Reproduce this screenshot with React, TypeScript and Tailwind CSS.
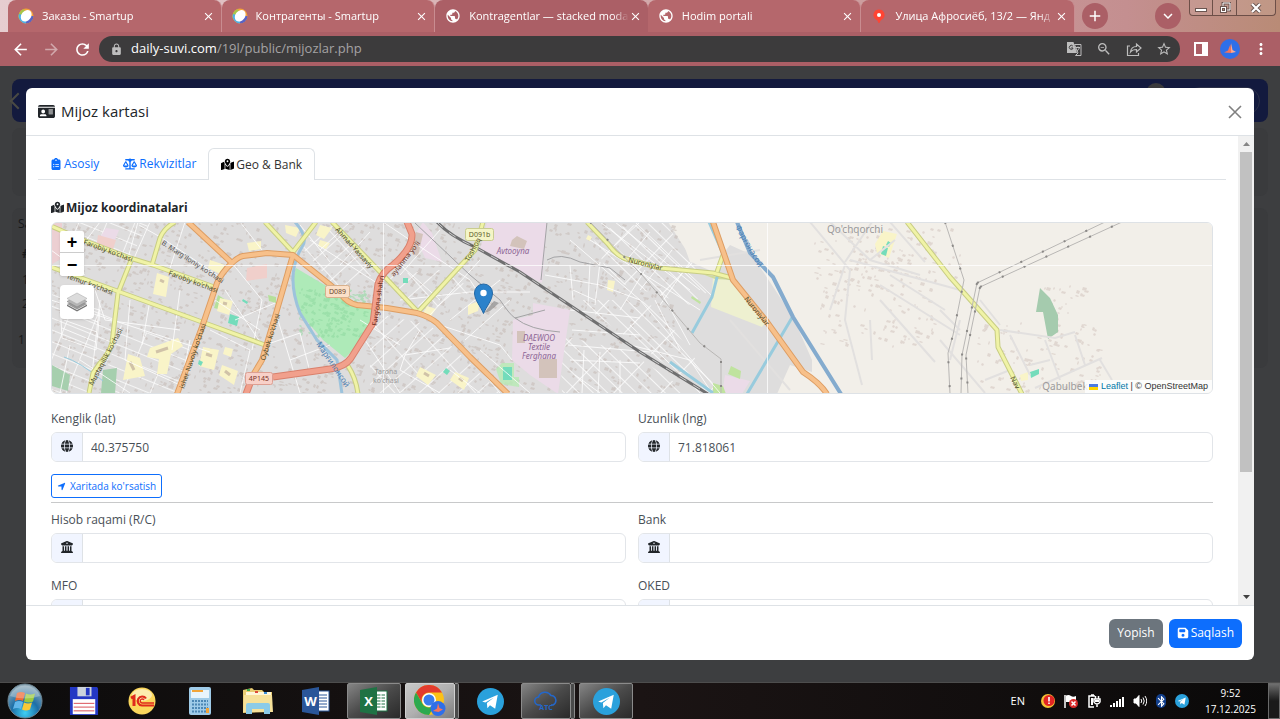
import type { ReactNode } from 'react';
import {
  FaBuildingColumns,
  FaClipboardList,
  FaFloppyDisk,
  FaGlobe,
  FaIdCard,
  FaLocationArrow,
  FaMapLocationDot,
  FaScaleBalanced,
} from 'react-icons/fa6';
import {
  MdAdd,
  MdArrowBack,
  MdArrowForward,
  MdBluetooth,
  MdClose,
  MdExpandMore,
  MdGTranslate,
  MdLock,
  MdMoreVert,
  MdPublic,
  MdRefresh,
  MdStarBorder,
  MdZoomOut,
} from 'react-icons/md';

/* ---------- Browser chrome ---------- */

function SmartupIcon() {
  return (
    <svg viewBox="0 0 16 16" className="size-4 shrink-0">
      <circle cx="8" cy="8" r="7.500" fill="#f4a23a" />
      <path d="M1 11 A7.500 7.500 0 0 1 6 1 L8 8 Z" fill="#a7c64a" />
      <path d="M1 6 A7.500 7.500 0 0 0 8 15.500 L8 8 Z" fill="#4fb0e6" />
      <path d="M8 15.500 A7.500 7.500 0 0 0 15.500 8 L8 8 Z" fill="#5a63c4" />
      <ellipse cx="8.200" cy="7.800" rx="4.800" ry="6.300" transform="rotate(38 8.200 7.800)" fill="#fff" />
    </svg>
  );
}

function YandexPin() {
  return (
    <svg viewBox="0 0 16 16" className="size-4 shrink-0">
      <path d="M8 1.500a5.500 5.500 0 0 1 4 9.300C10.500 12 9 12.500 8.500 15h-1C7 12.500 5.500 12 4 10.800A5.500 5.500 0 0 1 8 1.500z" fill="#f43" />
      <circle cx="8" cy="7" r="2" fill="#fff" />
    </svg>
  );
}

const TABS = [
  { title: 'Заказы - Smartup', icon: <SmartupIcon /> },
  { title: 'Контрагенты - Smartup', icon: <SmartupIcon /> },
  { title: 'Kontragentlar — stacked moda', icon: <MdPublic size={16} className="shrink-0" />, active: true },
  { title: 'Hodim portali', icon: <MdPublic size={16} className="shrink-0" /> },
  { title: 'Улица Афросиёб, 13/2 — Янд', icon: <YandexPin /> },
];

function TabStrip() {
  return (
    <div className="flex h-8 bg-linear-to-r from-[#e6cdd0] from-0% via-[#c48f90] via-88% to-[#b98b76] pl-2 text-white">
      <div className="flex min-w-0 max-w-[1067px] flex-1">
        {TABS.map((tab) => (
          <div
            key={tab.title}
            className={`flex min-w-0 flex-1 items-center rounded-t-lg pr-1.5 pl-2.5 ${
              tab.active ? 'bg-[#ab5f66]' : 'border-r border-[#c98c90] bg-[#b5676c]'
            }`}
          >
            {tab.icon}
            <span className="ml-2 min-w-0 flex-1 overflow-hidden mask-r-from-90% text-[11px] whitespace-nowrap">{tab.title}</span>
            <button aria-label="Close tab" className="shrink-0">
              <MdClose size={13} />
            </button>
          </div>
        ))}
      </div>
      <button aria-label="New tab" className="mt-[3px] ml-[7px] flex size-[26px] items-center justify-center rounded-full bg-[#ab5f66]">
        <MdAdd size={18} />
      </button>
      <div className="ml-auto flex">
        <button aria-label="Search tabs" className="mt-[3px] mr-2 flex size-[26px] items-center justify-center rounded-full bg-[#ab5f66]">
          <MdExpandMore size={18} />
        </button>
        <div className="mr-1 flex h-4 rounded-b border border-t-0 border-[#6d4f48] bg-white/10">
          <button aria-label="Minimize" className="flex w-[23px] items-center justify-center border-r border-[#6d4f48]">
            <span className="mt-1 h-1 w-3 border border-[#6a5550] bg-white" />
          </button>
          <button aria-label="Restore" className="flex w-6 items-center justify-center border-r border-[#6d4f48]">
            <svg viewBox="0 0 12 12" className="size-3" fill="none" stroke="#6a5550">
              <path d="M4 4V1h7v7H8" strokeWidth="3" />
              <path d="M4 4V1h7v7H8" stroke="#fff" />
              <rect x="1.500" y="4.500" width="6" height="6" fill="#fff" />
              <rect x="3.500" y="6.500" width="2" height="2" fill="#b98b76" />
            </svg>
          </button>
          <button aria-label="Close" className="flex w-[38px] items-center justify-center">
            <svg viewBox="0 0 12 10" className="h-2.5 w-3" fill="none">
              <path d="M2 1l8 8M10 1l-8 8" stroke="#6a5550" strokeWidth="4" />
              <path d="M2 1l8 8M10 1l-8 8" stroke="#fff" strokeWidth="2.200" />
            </svg>
          </button>
        </div>
      </div>
    </div>
  );
}

function Toolbar() {
  return (
    <div className="flex h-[34px] items-center bg-[#ab5f66] px-2.5 text-white">
      <div className="flex gap-2.5">
        <button aria-label="Back" className="px-px"><MdArrowBack size={19} /></button>
        <button aria-label="Forward" className="px-px text-white/45"><MdArrowForward size={19} /></button>
        <button aria-label="Reload" className="px-px"><MdRefresh size={19} /></button>
      </div>
      <div className="ml-1.5 flex h-[26px] min-w-0 flex-1 items-center rounded-full bg-[#3c3b3c] pr-2 pl-[11px] text-[#bdbdbd]">
        <MdLock size={13} className="shrink-0" />
        <span className="ml-2 flex-1 text-[13px] text-[#a5a3a4]">
          <span className="text-white">daily-suvi.com</span>/19l/public/mijozlar.php
        </span>
        <div className="flex gap-3.5">
          <button aria-label="Translate">
            <svg viewBox="0 0 16 16" className="size-4">
              <path d="M1 1h6.500l3.500 11H1z" fill="#bdbdbd" />
              <path d="M8.500 3.500H15v11H9.500L12 12z" fill="none" stroke="#bdbdbd" />
              <path d="M9.500 6.500h4.500M12 5.500v1M10.500 10q2.500-1 3-3.500" fill="none" stroke="#bdbdbd" />
              <path d="M6.800 5A2 2 0 1 0 7 7.500V7H5" fill="none" stroke="#3c3b3c" />
            </svg>
          </button>
          <button aria-label="Zoom"><MdZoomOut size={16} /></button>
          <button aria-label="Share">
            <svg viewBox="0 0 16 16" className="size-4" fill="none" stroke="currentColor" strokeWidth="1.200">
              <path d="M4 5H1.500v9.500h11V12" />
              <path d="M4.500 11c.5-4 3-5.500 6-5.500V3L15 7l-4.500 4V8.500C8 8.500 6 9 4.500 11z" />
            </svg>
          </button>
          <button aria-label="Bookmark"><MdStarBorder size={16} /></button>
        </div>
      </div>
      <div className="ml-3.5 flex items-center gap-3">
        <button aria-label="Side panel">
          <svg viewBox="0 0 14 14" className="size-3.5">
            <path fillRule="evenodd" d="M0 0h14v14H0zM2 2v10h6V2z" fill="#fff" />
          </svg>
        </button>
        <button aria-label="Profile">
          <svg viewBox="0 0 20 20" className="size-5">
            <circle cx="10" cy="10" r="10" fill="#2f6fe8" />
            <path d="M11 4l1.500 7 3.500 2-5 1z" fill="#ffab91" />
            <path d="M10.500 5l.8 9-7.300-.5 4-2z" fill="#f4745c" />
          </svg>
        </button>
        <button aria-label="Menu"><MdMoreVert size={18} /></button>
      </div>
    </div>
  );
}

/* ---------- Map ---------- */

const YELLOW_ROADS = [
  'M51 226 83 240 130 258 153 265 217 288',
  'M51 267 120 292 202 322 265 345',
  'M132 258 118 293 112 343Q108 355 100 363L93 373 89 393',
  'M152 265 160 238Q164 228 175 222',
  'M265 222 293 252 316 222',
  'M332 222 383 275 418 312 463 263 475 250 483 222',
  'M587 222 608 244Q618 258 630 260L660 268 713 273 732 278',
  'M717 272 723 255',
  'M907 222 950 277 997 330 998 347 1022 394',
  'M348 366Q356 378 358 394',
];

const ORANGE_ROADS = [
  'M188 222 232 263',
  'M177 394 202 327 217 283Q222 272 232 263 238 257 243 256L267 253 293 255 328 283 340 293Q347 303 357 305L387 308 417 313Q430 317 437 323L470 357 508 394',
  'M293 255 277 310 262 360 250 380',
  'M713 222 733 280 767 322 803 372Q820 383 827 394',
];

const RED_ROADS = [
  'M246 394 252 378',
  'M273 377 330 369Q345 367 351 358L373 323 378 284Q382 272 393 265 413 248 412 234L407 222',
];

const RAIL = 'M437 222Q450 236 475 247L520 272 640 352 708 394';

const MINOR_STREETS = [
  'M138 222 128 258M150 222 120 290M139 225 162 238 217 275M100 222 60 275M51 300 210 352M185 222 170 268M100 300 90 393',
  'M60 300 100 310 96 350 62 338ZM65 310 98 322M64 320 97 332M62 328 96 342M150 300 142 345M70 345 60 393',
  'M130 300 125 360 180 385M210 330 250 350 240 393M225 290 262 345M235 320 275 303M265 345 300 333 310 372M275 310 300 393M290 360 330 345',
  'M310 240 380 285M320 250 350 222M340 265 370 232M232 263 262 300 252 350M300 225 330 262M240 222 262 250',
  'M383 222 470 280 483 300M395 260 440 300M400 300 470 292 530 292M440 230 400 275M430 315 480 260M450 320 500 280M465 340 510 300M420 330 405 355 400 370 440 393M405 355 450 348',
  'M440 325 500 345 512 360M470 357 500 393M480 350 530 393M450 370 480 393M360 320 400 345M365 340 400 393M380 312 360 350',
  'M545 275 600 285 640 300M570 265 573 300M590 262 588 305M600 262 595 305M573 290 595 300M570 310 640 318M572 330 640 335M568 345 650 352M570 360 640 363M575 375 600 393M584 350 582 393M600 352 598 393M620 360 620 393',
  'M600 222 690 290M615 222 700 290M635 222 712 296M590 240 700 310M570 240 640 300M660 290 690 345M645 270 620 310M640 300 720 393M630 325 700 393M655 300 680 350M630 345 690 360 712 393',
  'M650 232 625 262M672 250 640 290M690 262 660 305M640 222 610 250',
  'M51 250 85 275M95 290 105 320 180 330M180 290 172 350M80 360 130 393M190 340 180 390M215 300 260 330',
];

const VILLAGE_STREETS = [
  'M810 222 850 270 845 320 862 385 M830 222 870 260 920 275 M872 222 845 262 M890 222 925 262 M845 265 830 310 M850 260 960 290 M880 300 935 362 M870 320 872 360 M880 285 960 335 M890 275 945 310 M870 260 895 240',
  'M1000 330 1055 338 1075 332 M1075 335 1085 365 M1010 335 1030 375 M1030 365 1050 360 M1045 340 1060 380 M985 380 1010 370 M1035 388 1102 358 M1100 360 1112 380 M980 300 1000 325 M940 310 960 330 M940 340 985 393',
  'M700 260 760 250M730 320 790 390M960 320 950 360',
];

const POWER_LINES = [
  'M945 222 964 280 953 335 948 353 950 394',
  'M977 283 1105 222M980 287 1122 222',
  'M977 283 962 355 961 394M980 287 966 355 968 394',
  'M590 222 642 275 700 343 721 359 721 394',
];

// small seeded generator so the building footprints stay the same on each render
function scatter(count: number, seed: number, x0: number, x1: number, y0: number, y1: number) {
  let s = seed;
  const next = () => {
    s = (s * 16807) % 2147483647;
    return s / 2147483647;
  };
  let d = '';
  for (let i = 0; i < count; i++) {
    const x = Math.round(x0 + next() * (x1 - x0));
    const y = Math.round(y0 + next() * (y1 - y0));
    const w = 1 + Math.round(next() * 3);
    const h = 1 + Math.round(next() * 2);
    d += `M${x} ${y}l${w} 1l-1 ${h}l-${w} -1z`;
  }
  return d;
}

const CITY_BLOCKS = scatter(1500, 71, 51, 545, 222, 394) + scatter(330, 19, 545, 680, 222, 394);
const VILLAGE_HOUSES =
  scatter(160, 33, 815, 935, 235, 345) + scatter(60, 5, 850, 960, 225, 290) + scatter(100, 12, 978, 1100, 320, 390) + scatter(30, 8, 1045, 1085, 285, 330);

function MapTiles() {
  return (
    <svg viewBox="51 223 1162 170" preserveAspectRatio="xMidYMid slice" className="h-[170px] w-full" fontFamily="'Noto Sans', sans-serif">
      <defs>
        <pattern id="streets-a" width="26" height="11" patternUnits="userSpaceOnUse" patternTransform="rotate(22)">
          <path d="M0 .5H26M.5 0V11" fill="none" stroke="#fff" strokeOpacity=".7" />
        </pattern>
        <pattern id="streets-b" width="30" height="13" patternUnits="userSpaceOnUse" patternTransform="rotate(-42)">
          <path d="M0 .5H30M.5 0V13" fill="none" stroke="#fff" strokeOpacity=".7" />
        </pattern>
        <pattern id="streets-c" width="34" height="10" patternUnits="userSpaceOnUse" patternTransform="rotate(44)">
          <path d="M0 .5H34M.5 0V10" fill="none" stroke="#fff" strokeOpacity=".75" />
        </pattern>
      </defs>

      <rect x="0" y="200" width="1300" height="220" fill="#f2efe9" />
      <path d="M0 200H668L690 262 712 268 730 245 752 255 793 317 812 360 812 372 790 365 777 394H0z" fill="#dedddd" />
      <path d="M668 222H712L723 254 714 272 695 264z" fill="#f2efe9" />

      <path d={CITY_BLOCKS} fill="#c6bcb8" opacity=".6" />
      <path d={VILLAGE_HOUSES} fill="#d9cdc6" opacity=".7" />
      <path d="M51 294 118 316 108 360 88 393H51zM60 225 130 258 150 222H70zM120 325 190 345 180 393H100z" fill="url(#streets-a)" />
      <path d="M300 245 330 222 378 272 340 293zM383 315 430 325 500 393H370V330zM380 275 440 270 475 290 425 312z" fill="url(#streets-b)" />
      <path d="M590 230 665 222 710 290 690 305 610 280zM640 300 660 310 720 393H706L575 300zM560 335 630 352 690 393H562z" fill="url(#streets-c)" />

      {/* industrial and commercial areas */}
      <g fill="#ebdbe8">
        <path d="M487 222H547L542 283 520 272 480 250z" />
        <path d="M533 303 570 310 558 394 530 375 512 360 513 320 533 315z" />
        <path d="M423 222 432 233 442 262 425 258 415 235z" />
        <path d="M106 228 119 230 113 245 98 240z" />
        <path d="M725 375 750 381 742 394H722z" />
      </g>
      <path d="M51 222H62V258L51 265z" fill="#eccfd2" />
      <path d="M98 235 116 240 112 252 96 248zM247 268 267 264V278L246 281z" fill="#f0cfcb" />
      <path d="M713 277 733 281 765 323 762 327 711 307z" fill="#eef0d0" />
      <path d="M702 274 735 280 715 279z" fill="#cfdc9c" />

      {/* parks and greenery */}
      <path d="M296 268 328 287 340 297Q350 307 372 308L372 322 357 346 345 358 323 340 300 313 292 285z" fill="#aeeab8" />
      <path d={scatter(170, 44, 300, 366, 288, 335)} fill="#8fd8a0" opacity=".6" />
      <path d="M52 365 70 375 68 391 52 386zM103 370 117 368 115 394 101 393z" fill="#a6cfae" />
      <path d="M1040 288 1050 298 1058 315V332L1048 339 1043 312H1036z" fill="#a5cbae" />
      <path d="M218 295 226 300 222 310 214 308zM268 295l8 2v6l-7-2z" fill="#b5e09b" />
      <path d="M731 366l10 5-1 8-12-5zM713 383l10 3 3 8h-13zM692 296l9 6-1 2-9-6z" fill="#bfe39e" />
      <path d="M502 363h12v14h5v10l-18-3-5-15z" fill="#b6ebb4" opacity=".8" />

      {/* schools */}
      <g fill="#f9f4c8">
        <path d="M157 273l12 4-3 20-13-3zM128 354l12 4 5 18-22 4zM150 348l28-10 5 8-12 8-4 20h-10l2-15-12-2zM203 347l16 3-5 20-15-4zM220 298l13 3-4 14-12-4zM222 365l16 6-4 14-15-10zM225 347l8 2-2 8-8-3z" />
        <path d="M320 225l12 3-8 11-8-4zM420 367l16 8-8 10-12-9zM455 372l14 6-5 12-14-10zM608 280l7 1-2 11-6-2zM468 305l12-4-2 10-10 4zM427 306l9 3-5 7-8-3zM588 235l4 2-2 4-4-2zM247 243l14-2v8l-12 2zM285 225l15 3-4 9-10-4zM320 240l10 3-4 6-8-3zM210 260l15 5-5 9-12-6z" />
        <path d="M875 244l8-13 14 3-8 24-12-5zM1020 375l8-3v8l-7 1z" />
      </g>
      <path d="M130 362l4 8M156 352l12-4M160 280l4 2M206 354l6 2M223 303l4 1M225 371l5 4M424 373l5 3M459 378l4 3M503 367v0" stroke="#d0c2a8" strokeWidth="3" />
      <path d="M230 314l9 3-2 9-9-3zM503 367h9v13h-9zM446 368l4 3-3 4-4-3zM403 278h5v5h-5zM883 246l5 2-2 8-5-2zM888 241l3 2-2 4-3-2zM1030 372l9-3v5l-8 4zM199 360l4 2-2 4-3-2zM243 299l5 3-1 2-5-3z" fill="#74dcbb" />
      <path d="M512 240l5-4 10 5-3 8-14-3zM539 359h18v19h-18zM517 331h8v12h-8zM416 232l7 2-5 22-6-2z" fill="#d3c3bb" />

      {/* streets */}
      <g fill="none" stroke="#fff" strokeOpacity=".8">
        {MINOR_STREETS.map((d) => (
          <path key={d} d={d} />
        ))}
      </g>
      <g fill="none" stroke="#e2e0df" strokeWidth="2">
        {VILLAGE_STREETS.map((d) => (
          <path key={d} d={d} />
        ))}
      </g>

      {/* water */}
      <g fill="none" stroke="#98cbdd" strokeWidth="3">
        <path d="M709 222 723 254 712 297 692 333" />
        <path d="M793 316 747 394M670 362 713 393" />
        <path d="M295 222Q309 238 302 247 285 275 300 313L317 340 337 360 342 394" stroke="#9dc3dc" />
        <path d="M64 357Q80 362 103 381" strokeWidth="1" />
      </g>
      <path d="M737 222 750 253 773 277 793 317 841 394" fill="none" stroke="#84abce" strokeWidth="4" />

      {/* railway */}
      <g fill="none" stroke="#a3a3a5" strokeWidth="1">
        <path d="M415 223 470 275 500 300Q510 315 515 318L545 310M515 318Q530 330 560 332M547 222 541 280M547 260Q560 252 580 262L610 268 625 280" />
        <path d={RAIL} stroke="#6f6f70" strokeWidth="3" />
        <path d={RAIL} stroke="#c9c9c9" strokeWidth="1" strokeDasharray="8 8" />
      </g>

      {/* main roads: casing first, fill on top */}
      <g fill="none" strokeLinejoin="round">
        {YELLOW_ROADS.map((d) => (
          <path key={d} d={d} stroke="#c8cd84" strokeWidth="5" />
        ))}
        {YELLOW_ROADS.map((d) => (
          <path key={d} d={d} stroke="#f0f3a6" strokeWidth="3" />
        ))}
        {ORANGE_ROADS.map((d) => (
          <path key={d} d={d} stroke="#dd9d63" strokeWidth="6" />
        ))}
        {ORANGE_ROADS.map((d) => (
          <path key={d} d={d} stroke="#f7c08a" strokeWidth="4" />
        ))}
        {RED_ROADS.map((d) => (
          <path key={d} d={d} stroke="#d9806c" strokeWidth="7" />
        ))}
        {RED_ROADS.map((d) => (
          <path key={d} d={d} stroke="#f1a08c" strokeWidth="5" />
        ))}
      </g>

      <g fill="none" stroke="#b9b7b5" strokeWidth="1">
        {POWER_LINES.map((d) => (
          <path key={d} d={d} />
        ))}
        {POWER_LINES.map((d) => (
          <path key={d} d={d} stroke="#8b8987" strokeWidth="2" strokeDasharray="2 22" />
        ))}
      </g>

      {/* tile seams */}
      <path d="M51 265.500H1213M383.500 222V394M767.500 222V394" stroke="#fff" strokeOpacity=".75" />

      {/* road numbers */}
      <g fontSize="7" textAnchor="middle" strokeWidth="1">
        <rect x="325.500" y="285.500" width="24" height="12" rx="2" fill="#fbe0c8" stroke="#d8b08c" />
        <text x="337.500" y="294" fill="#6b4a2c">D089</text>
        <rect x="465.500" y="228.500" width="28" height="12" rx="2" fill="#f4f5c6" stroke="#c9cc90" />
        <text x="479.500" y="237" fill="#5c5e2c">D091b</text>
        <rect x="245.500" y="372.500" width="27" height="12" rx="2" fill="#f8d0c8" stroke="#dd9f92" />
        <text x="259" y="381" fill="#7a3328">4P145</text>
      </g>

      <g fontSize="7" fill="#4d4c2c">
        <text transform="translate(83 244) rotate(20)">Farobiy ko'chasi</text>
        <text transform="translate(168 275) rotate(20)">Farobiy ko'chasi</text>
        <text transform="translate(66 278) rotate(20)">Temur ko'chasi</text>
        <text transform="translate(161 244) rotate(33)" fill="#555">B. Marg'iloniy ko'chasi</text>
        <text transform="translate(93 386) rotate(-62)">Mustaqillik ko'chasi</text>
        <text transform="translate(184 389) rotate(-71)">isher Navoiy ko'chasi</text>
        <text transform="translate(265 361) rotate(-72)">Oybek ko'chasi</text>
        <text transform="translate(335 230) rotate(48)">Ahmad Yassaviy</text>
        <text transform="translate(377 326) rotate(-82)" fill="#6b2f24">Farg'ona shahri</text>
        <text transform="translate(394 277) rotate(-52)" fill="#6b2f24">aylanma yo'li</text>
        <text transform="translate(469 262) rotate(-62)">Toshloq</text>
        <text transform="translate(628 262) rotate(14)">Nuroniylar</text>
        <text transform="translate(744 299) rotate(51)">Nuroniylar</text>
        <text transform="translate(1010 378) rotate(62)">Nav</text>
      </g>
      <g fontSize="8" fill="#4a7fb5">
        <text transform="translate(735 227) rotate(60)">Фарғонасой</text>
        <text transform="translate(316 344) rotate(56)">Марғилонсой</text>
      </g>
      <g fontSize="8" textAnchor="middle" fontStyle="italic" fill="#8b6594">
        <text x="513" y="254">Avtooyna</text>
        <text x="539" y="341">DAEWOO</text>
        <text x="539" y="350">Textile</text>
        <text x="539" y="359">Ferghana</text>
      </g>
      <g textAnchor="middle" fill="#9b9a9b">
        <text x="386" y="374" fontSize="7">Tarona</text>
        <text x="386" y="383" fontSize="7">ko'chasi</text>
        <text x="855" y="233" fontSize="10">Qo'chqorchi</text>
        <text x="1065" y="390" fontSize="10">Qabulbek</text>
      </g>

      {/* marker */}
      <path d="M484 313 494 301 499 303 490 311z" fill="#000" opacity=".25" />
      <path d="M483.500 313.500C481 307 474.500 300 474.500 293a9 9 0 0 1 18 0C492.500 300 486 307 483.500 313.500z" fill="#2b82cb" stroke="#2468a5" />
      <circle cx="483.500" cy="293" r="3.200" fill="#fff" />
    </svg>
  );
}

function MapView() {
  return (
    <div className="relative overflow-hidden rounded-md border border-[#dee2e6]">
      <MapTiles />
      <div className="absolute top-2 left-2 flex flex-col gap-[9px]">
        <div className="flex w-6 flex-col divide-y divide-[#ccc] rounded-xs bg-white font-['Liberation_Sans',sans-serif] text-lg leading-[22px] font-bold text-black shadow">
          <button aria-label="Zoom in" className="h-[22px]">+</button>
          <button aria-label="Zoom out" className="h-[23px]">−</button>
        </div>
        <button aria-label="Layers" className="flex size-[34px] items-center justify-center rounded bg-white shadow">
          <svg viewBox="0 0 20 20" className="size-5">
            <path d="M0 12.500 10 18l10-5.500v1.500L10 19.500 0 14z" fill="#777" />
            <path d="M0 12 10 7l10 5-10 5.500z" fill="#9b9b9b" />
            <path d="M0 9.500 10 4l10 5.500L10 15z" fill="#b5b5b5" stroke="#888" strokeWidth=".6" />
            <path d="M0 6.500 10 1l10 5.500L10 12z" fill="#dcdcdc" stroke="#b0b0b0" strokeWidth=".6" />
          </svg>
        </button>
      </div>
      <div className="absolute right-0 bottom-0 flex h-[13px] items-center bg-white/80 px-1 font-['Liberation_Sans',sans-serif] text-[9px] text-[#333]">
        <svg viewBox="0 0 9 6" className="mr-[3px] h-1.5 w-[9px]">
          <path d="M0 0h9v3H0z" fill="#4c7be1" />
          <path d="M0 3h9v3H0z" fill="#ffd500" />
        </svg>
        <a href="#leaflet" className="text-[#0078a8]">Leaflet</a>
        <span className="whitespace-pre"> | © OpenStreetMap</span>
      </div>
    </div>
  );
}

/* ---------- Modal ---------- */

interface FieldProps {
  id: string;
  label: string;
  icon: ReactNode;
  value?: string;
}

function Field({ id, label, icon, value = '' }: FieldProps) {
  return (
    <div className="min-w-0">
      <label htmlFor={id} className="block h-[22px] text-xs leading-[18px] text-[#495057]">{label}</label>
      <div className="flex h-[30px] overflow-hidden rounded-md border border-[#e2e5e9]">
        <span className="flex w-[31px] shrink-0 items-center justify-center border-r border-[#dee2e6] bg-[#f1f5ff] pb-0.5 text-[#212529]">{icon}</span>
        <input id={id} type="text" defaultValue={value} className="min-w-0 flex-1 px-2 pt-0.5 text-xs text-[#495057] outline-none" />
      </div>
    </div>
  );
}

function ModalTabs() {
  return (
    <div role="tablist" className="flex h-8 border-b border-[#dee2e6] text-xs">
      <button role="tab" className="flex items-center gap-0.5 px-3 text-[#0d6efd]">
        <FaClipboardList size={12} /> Asosiy
      </button>
      <button role="tab" className="flex items-center gap-0.5 px-3 text-[#0d6efd]">
        <FaScaleBalanced size={14} /> Rekvizitlar
      </button>
      <button
        role="tab"
        aria-selected="true"
        className="-mb-px flex items-center gap-0.5 rounded-t-md border border-b-0 border-[#dee2e6] bg-white px-3 text-[#333]"
      >
        <FaMapLocationDot size={13} className="text-black" /> Geo &amp; Bank
      </button>
    </div>
  );
}

function ScrollBar() {
  return (
    <div aria-hidden="true" className="flex w-4 shrink-0 flex-col items-center bg-[#f1f1f1] py-1.5">
      <svg viewBox="0 0 7 4" className="h-1 w-[7px]"><path d="M0 4 3.500 0 7 4z" fill="#868686" /></svg>
      <div className="mt-1.5 h-[70%] w-3 bg-[#c1c1c1]" />
      <svg viewBox="0 0 7 4" className="mt-auto h-1 w-[7px]"><path d="M0 0h7L3.500 4z" fill="#404040" /></svg>
    </div>
  );
}

function CustomerModal() {
  return (
    <div role="dialog" aria-labelledby="modal-title" className="relative flex min-h-0 flex-1 flex-col overflow-hidden rounded-md bg-white text-[#212529]">
      <header className="flex h-12 shrink-0 items-center justify-between border-b border-[#dee2e6] px-3">
        <h5 id="modal-title" className="flex items-center gap-1.5 text-[15px]">
          <FaIdCard size={17} /> Mijoz kartasi
        </h5>
        <button aria-label="Close" className="text-[#808080]">
          <svg viewBox="0 0 14 14" className="size-3.5" stroke="currentColor" strokeWidth="1.600">
            <path d="M1 1l12 12M13 1 1 13" />
          </svg>
        </button>
      </header>

      <div className="flex min-h-0 flex-1">
        <div className="min-w-0 flex-1 overflow-hidden p-3">
          <ModalTabs />
          <form className="px-[13px] pt-[19px]">
            <h6 className="mb-1.5 flex h-[17px] items-center gap-0.5 text-xs font-bold">
              <FaMapLocationDot size={13} /> Mijoz koordinatalari
            </h6>
            <MapView />
            <div className="mt-4 grid grid-cols-2 gap-x-3">
              <Field id="lat" label="Kenglik (lat)" icon={<FaGlobe size={12} />} value="40.375750" />
              <Field id="lng" label="Uzunlik (lng)" icon={<FaGlobe size={12} />} value="71.818061" />
            </div>
            <button type="button" className="mt-3 flex h-6 items-center gap-1 rounded-[3px] border border-[#0d6efd] px-[5px] text-[10px] text-[#0d6efd]">
              <FaLocationArrow size={9} /> Xaritada ko'rsatish
            </button>
            <hr className="mt-1 mb-2 border-[#c8c9ca]" />
            <div className="grid grid-cols-2 gap-x-3 gap-y-3.5">
              <Field id="account" label="Hisob raqami (R/C)" icon={<FaBuildingColumns size={12} />} />
              <Field id="bank" label="Bank" icon={<FaBuildingColumns size={12} />} />
              <Field id="mfo" label="MFO" icon={<FaBuildingColumns size={12} />} />
              <Field id="oked" label="OKED" icon={<FaBuildingColumns size={12} />} />
            </div>
          </form>
        </div>
        <ScrollBar />
      </div>

      <footer className="flex h-[55px] shrink-0 items-center justify-end gap-1.5 border-t border-[#dee2e6] px-3 text-xs text-white">
        <button className="h-[29px] rounded-md bg-[#6c757d] px-2">Yopish</button>
        <button className="flex h-[29px] items-center gap-0.5 rounded-md bg-[#0d6efd] px-2">
          <FaFloppyDisk size={12} /> Saqlash
        </button>
      </footer>
    </div>
  );
}

// dimmed list page that stays visible round the edges of the modal
function DimmedPage() {
  return (
    <div aria-hidden="true" className="absolute inset-0 px-3 pt-[13px] text-xs text-[#17181a]">
      <div className="flex h-[43px] items-center justify-end gap-5 rounded-lg bg-[#131a3e] pr-2">
        <span className="mr-auto size-3 rotate-45 border-b-2 border-l-2 border-[#4a4a44]" />
        <span className="mb-4 size-5 rounded-full bg-[#3a3a3c]" />
        <span className="h-7 w-[74px] rounded-full border border-[#2b3048]" />
      </div>
      <div className="mt-1.5 h-[68px] rounded-lg bg-[#3a3b3d]" />
      <div className="mt-3 h-40 rounded-lg bg-[#3a3b3d] px-1.5">
        <div className="flex h-8 items-center">Sahifa</div>
        <div className="flex h-7 items-center pl-1 font-bold">#</div>
        <div className="flex h-6 items-center pl-1">1</div>
        <div className="flex h-6 items-center pl-1">2</div>
        <div className="flex h-12 items-center">1</div>
      </div>
    </div>
  );
}

/* ---------- Taskbar ---------- */

function TelegramIcon({ size }: { size: number }) {
  return (
    <svg viewBox="0 0 26 26" width={size} height={size}>
      <circle cx="13" cy="13" r="13" fill="#2aa1dc" />
      <path d="M5 13 20 6.500 17.500 20l-5-3.500-2.500 3-.5-5L16 9.500 8 14z" fill="#fff" />
    </svg>
  );
}

function StartOrb() {
  return (
    <svg viewBox="0 0 36 36" className="size-9">
      <defs>
        <radialGradient id="orb" cx="50%" cy="85%" r="80%">
          <stop offset="0" stopColor="#3fd0f5" />
          <stop offset=".5" stopColor="#1d6ea6" />
          <stop offset="1" stopColor="#8ea9b8" />
        </radialGradient>
      </defs>
      <circle cx="18" cy="18" r="17" fill="url(#orb)" stroke="#6f8794" />
      <path d="M10 10q4-2 8 0l-2 8q-4-2-8 0z" fill="#ee6a35" />
      <path d="M19 10.500q4 2 9 0l-2 8q-4 2-9 0z" fill="#9bc93f" />
      <path d="M8 19q4-2 8 0l-2 7q-4-2-8 0z" fill="#62b6ea" />
      <path d="M17 19.500q4 2 8 0l-2 7q-4 2-8 0z" fill="#fbc935" />
      <path d="M3 13A16 16 0 0 1 33 13Q18 18 3 13z" fill="#fff" opacity=".28" />
    </svg>
  );
}

function FloppyIcon() {
  return (
    <svg viewBox="0 0 32 32" className="size-[30px]">
      <path d="M1 1h29l1 2v28H1z" fill="#2438c4" />
      <path d="M9 1h15v10H9z" fill="#ccd3dc" />
      <path d="M18 2h4v8h-4z" fill="#2438c4" />
      <path d="M4 14h24v16H4z" fill="#fff" />
      <path d="M5 18.500h22M5 22.500h22M5 26.500h22" stroke="#d8474f" />
    </svg>
  );
}

function OneCIcon() {
  return (
    <svg viewBox="0 0 28 28" className="size-7">
      <circle cx="14" cy="14" r="13.500" fill="#fbd75c" />
      <ellipse cx="14" cy="8" rx="10" ry="6" fill="#fff" opacity=".5" />
      <g fill="none" stroke="#e02a1c" strokeWidth="2.200">
        <path d="M3 11 6 9.500V19" strokeWidth="3" />
        <path d="M18 11.500A4.500 4.500 0 1 0 14 18.500H26" />
        <path d="M16 13a2 2 0 1 0-1.500 3H26" strokeWidth="1.300" />
      </g>
    </svg>
  );
}

function CalculatorIcon() {
  return (
    <svg viewBox="0 0 22 28" className="h-7 w-[22px]">
      <rect width="22" height="28" rx="2" fill="#9fcbe8" />
      <rect x="2" y="3" width="18" height="8" fill="#e8f4fc" />
      <path d="M3 3h11v2H3z" fill="#f2a53a" />
      <path d="M3 14h16M3 17.500h16M3 21h16M3 24.500h16" stroke="#4d87b4" strokeWidth="2" strokeDasharray="2 1" />
      <path d="M17 21h3v5h-3z" fill="#f2a53a" />
    </svg>
  );
}

function FolderIcon() {
  return (
    <svg viewBox="0 0 32 28" className="h-7 w-8">
      <path d="M1 3 10 1l2 2h8l2 2h8v20L1 26z" fill="#e9cd73" />
      <path d="M4 5h25v6H4z" fill="#fff7d8" />
      <path d="M2 8h28l1 17H1z" fill="#f6e19a" />
      <path d="M5 2h3v2H5z" fill="#3faa4c" />
      <path d="M13 4h3v2h-3z" fill="#dd4b39" />
      <path d="M22 5h3v2h-3z" fill="#3a8fd8" />
      <path d="M4 27V18q0-2 2-2h20q2 0 2 2v9h-6v-5H10v5z" fill="#8ccbe8" />
    </svg>
  );
}

function OfficeIcon({ letter }: { letter: 'W' | 'X' }) {
  const fill = letter === 'W' ? '#2a5699' : '#1f7244';
  return (
    <svg viewBox="0 0 28 28" className="size-7">
      <rect x="14" y="4" width="13" height="20" fill="#fff" stroke={fill} />
      <path d="M17 8h8M17 11h8M17 14h8M17 17h8M17 20h8" stroke={fill} />
      {letter === 'X' && <path d="M21 6v16" stroke="#fff" strokeWidth="1" />}
      <path d="M0 3 17 0v28L0 25z" fill={fill} />
      <text x="8.500" y="19" fontSize="13" fontWeight="700" fill="#fff" textAnchor="middle">{letter}</text>
    </svg>
  );
}

function ChromeIcon() {
  return (
    <svg viewBox="0 0 32 32" className="size-8">
      <circle cx="15" cy="15" r="15" fill="#fbc116" />
      <path d="M2 7.500A15 15 0 0 1 28 7.500H15A7.500 7.500 0 0 0 8.500 18.700z" fill="#e33b2e" />
      <path d="M2 7.500A15 15 0 0 0 15 30L21.500 18.700A7.500 7.500 0 0 1 8.500 18.700z" fill="#2da94f" />
      <circle cx="15" cy="15" r="7" fill="#fff" />
      <circle cx="15" cy="15" r="5.500" fill="#3a7cec" />
      <circle cx="24" cy="23.500" r="7.500" fill="#2f6fe8" />
      <path d="M24 18l1.500 5 3.500 1.500-4.500 2.500-5.500-1 4-2.500z" fill="#f4745c" />
    </svg>
  );
}

function AtcIcon() {
  return (
    <svg viewBox="0 0 24 20" className="h-5 w-6">
      <path d="M7 14H5a4 4 0 0 1-.5-8A7 7 0 0 1 17 4.500 5 5 0 0 1 19 14h-2" fill="none" stroke="#2467c9" strokeWidth="1.500" />
      <text x="12" y="19" fontSize="7" fontWeight="700" textAnchor="middle" fill="#2467c9">ATC</text>
    </svg>
  );
}

interface TaskbarApp {
  name: string;
  icon: ReactNode;
  state?: 'open' | 'current';
  stacked?: boolean;
}

const APPS: TaskbarApp[] = [
  { name: 'Save', icon: <FloppyIcon /> },
  { name: '1C', icon: <OneCIcon /> },
  { name: 'Calculator', icon: <CalculatorIcon /> },
  { name: 'Explorer', icon: <FolderIcon /> },
  { name: 'Word', icon: <OfficeIcon letter="W" /> },
  { name: 'Excel', icon: <OfficeIcon letter="X" />, state: 'open' },
  { name: 'Chrome', icon: <ChromeIcon />, state: 'current', stacked: true },
  { name: 'Telegram', icon: <TelegramIcon size={27} /> },
  { name: 'ATC', icon: <AtcIcon />, state: 'open', stacked: true },
  { name: 'Telegram 2', icon: <TelegramIcon size={27} />, state: 'open' },
];

const APP_STATE = {
  none: 'border-transparent',
  open: 'border-[#8b8b8b] bg-linear-to-br from-[#858585] via-[#4a4a4a] to-[#2a2a2a]',
  current: 'border-[#d0d0d0] bg-linear-to-br from-[#c8c8c8] via-[#b0b0b0] to-[#7d7d7d]',
};

function Taskbar() {
  return (
    <footer className="flex h-[37px] shrink-0 items-center border-t border-[#4d4d4d] bg-linear-to-r from-[#0d0c0c] via-[#1b1414] to-[#0a0909] text-white">
      <button aria-label="Start" className="ml-[7px] w-12"><StartOrb /></button>
      {APPS.map((app) => (
        <div key={app.name} className="flex h-full w-[58px] justify-center">
          <button
            aria-label={app.name}
            className={`flex h-full items-center justify-center rounded-xs border ${app.stacked ? 'w-[50px]' : 'w-[54px]'} ${APP_STATE[app.state ?? 'none']}`}
          >
            {app.icon}
          </button>
          {app.stacked && <span className="w-1 rounded-r-xs border border-l-0 border-[#8b8b8b] bg-[#4a4a4a]" />}
        </div>
      ))}
      <div className="ml-auto flex h-full items-center">
        <span className="mr-4 text-[11px]">EN</span>
        <div className="flex items-center gap-[9px]">
          <svg viewBox="0 0 14 14" className="size-3.5">
            <circle cx="7" cy="7" r="7" fill="#f3c234" />
            <circle cx="8" cy="6.500" r="5.500" fill="#e02424" />
            <path d="M8 3v4.500M8 8.500V10" stroke="#fff" strokeWidth="1.600" />
          </svg>
          <svg viewBox="0 0 14 14" className="size-3.5">
            <path d="M1 1v13" stroke="#fff" strokeWidth="1.500" />
            <path d="M2 1.500q3-1 5 .5t5 0v6H2z" fill="#fff" />
            <circle cx="9.500" cy="9.500" r="4.500" fill="#d92b2b" />
            <path d="M7.500 7.500l4 4M11.500 7.500l-4 4" stroke="#fff" strokeWidth="1.500" />
          </svg>
          <svg viewBox="0 0 14 14" className="size-3.5" fill="none" stroke="#fff" strokeWidth="1.500">
            <path d="M7 13H2V2h6M4 1h3" />
            <path d="M7 5h6v3q-1 2-3 2T7 8zM8.500 2v3M11.500 2v3M10 10v3" />
            <path d="M8 6h4v2H8zM4 4h2v7H4z" fill="#fff" stroke="none" />
          </svg>
          <svg viewBox="0 0 14 14" className="size-3.5" fill="#fff">
            <path d="M0 11h2v2H0zM3 9h2v4H3zM6 7h2v6H6zM9 5h2v8H9zM12 3h2v10h-2z" />
          </svg>
          <svg viewBox="0 0 14 14" className="size-3.5" fill="none" stroke="#fff">
            <path d="M1 5h2l3-3.500v11L3 9H1z" fill="#fff" />
            <path d="M8 5q1.500 2 0 4M10 3.500q2.500 3.500 0 7M12 2q3.500 5 0 10" />
          </svg>
          <span className="flex h-3.5 w-2.5 items-center justify-center rounded-full bg-[#123f8c]"><MdBluetooth size={13} className="shrink-0" /></span>
          <TelegramIcon size={14} />
        </div>
        <div className="mr-3 ml-4 flex flex-col items-center text-[10px] leading-4">
          <time>9:52</time>
          <time>17.12.2025</time>
        </div>
        <button aria-label="Show desktop" className="h-full w-3 border border-[#6a6a6a] bg-linear-to-b from-[#6f6f6f] to-[#1a1a1a] to-50%" />
      </div>
    </footer>
  );
}

export default function App() {
  return (
    <div className="flex h-screen flex-col overflow-hidden bg-[#3d3e40] font-['Open_Sans','Noto_Sans',sans-serif]">
      <TabStrip />
      <Toolbar />
      <main className="relative flex min-h-0 flex-1 flex-col px-[26px] py-[22px]">
        <DimmedPage />
        <CustomerModal />
      </main>
      <Taskbar />
    </div>
  );
}
